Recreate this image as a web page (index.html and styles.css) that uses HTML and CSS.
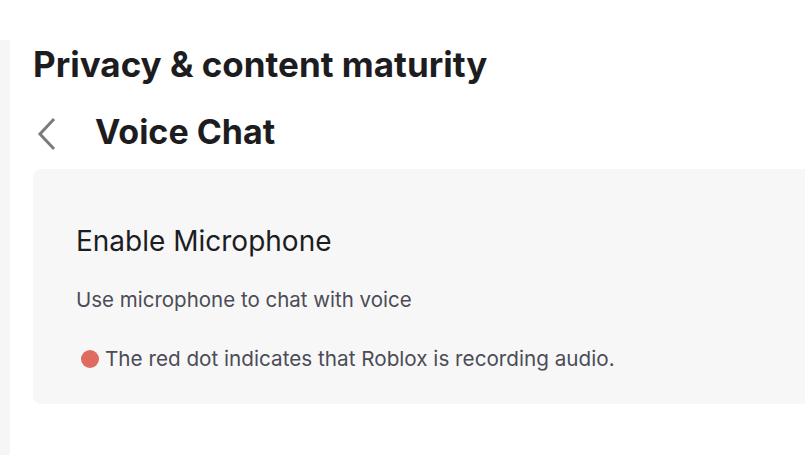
FILE: index.html
```html
<!DOCTYPE html>
<html>
<head>
<meta charset="utf-8">
<link rel="stylesheet" href="styles.css">
</head>
<body>
<div class="page">
  <div class="sidebar"></div>
  <main class="content">
    <h1 class="title">Privacy &amp; content maturity</h1>
    <div class="subhead">
      <svg class="back" width="20" height="34" viewBox="0 0 20 34"><path d="M17 2 L3 17 L17 32" fill="none" stroke="#7b7b7b" stroke-width="3"/></svg>
      <h2 class="subtitle">Voice Chat</h2>
    </div>
    <section class="card">
      <h3 class="card-title">Enable Microphone</h3>
      <p class="card-desc">Use microphone to chat with voice</p>
      <p class="card-note"><span class="dot"></span>The red dot indicates that Roblox is recording audio.</p>
    </section>
  </main>
</div>
</body>
</html>
```
FILE: styles.css
```css
html, body { margin: 0; padding: 0; background: #fff; }
body { font-family: Inter, "Noto Sans", sans-serif; color: #1d1d21; }
.page { display: flex; height: 455px; padding-top: 40px; box-sizing: border-box; }
.sidebar { width: 10px; background: #f6f6f7; flex-shrink: 0; }
.content { flex: 1; padding-left: 23px; }
.title { margin: 0; font-size: 35px; font-weight: 700; line-height: 48px; letter-spacing: 0; }
.subhead { display: flex; align-items: center; margin-top: 22px; height: 44px; }
.back { margin-left: 4px; margin-right: 38px; margin-top: 4px; }
.subtitle { margin: 0; font-size: 34px; font-weight: 700; line-height: 44px; }
.card { margin-top: 15px; background: #f7f7f8; border-radius: 8px 0 0 8px; padding: 54px 43px 31px; }
.card-title { margin: 0; font-size: 28px; font-weight: 400; line-height: 36px; }
.card-desc { margin: 27px 0 0; font-size: 20.5px; color: #4c4c56; line-height: 28px; }
.card-note { margin: 31px 0 0; font-size: 20.7px; color: #4c4c56; line-height: 28px; display: flex; align-items: center; }
.dot { width: 18px; height: 18px; border-radius: 50%; background: #e06b61; margin: 0 6px 0 5px; }
```
